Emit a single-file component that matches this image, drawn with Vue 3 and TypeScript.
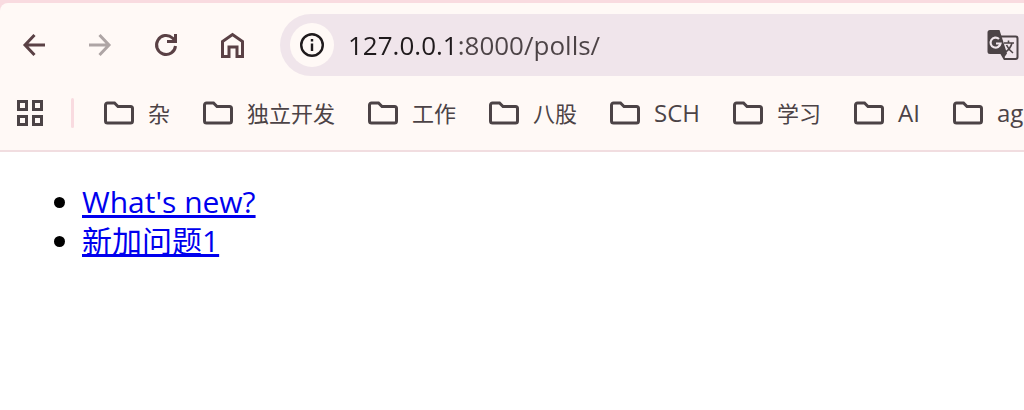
<script setup lang="ts">
import { ref } from 'vue'

interface Poll {
  id: number
  question: string
}

interface Folder {
  name: string
  latin?: boolean
}

const address = ref('127.0.0.1:8000/polls/')
const folders: Folder[] = [
  { name: '杂' },
  { name: '独立开发' },
  { name: '工作' },
  { name: '八股' },
  { name: 'SCH', latin: true },
  { name: '学习' },
  { name: 'AI', latin: true },
  { name: 'ag', latin: true },
]
const polls: Poll[] = [
  { id: 1, question: "What's new?" },
  { id: 2, question: '新加问题1' },
]
</script>

<template>
  <div class="browser">
    <header class="chrome">
      <div class="toolbar">
        <nav class="controls" aria-label="Navigation">
          <button type="button" class="tool" aria-label="Back">
            <svg viewBox="0 0 24 24"><path d="M22 12H2.500M11.500 2L2 12l9.500 10" /></svg>
          </button>
          <button type="button" class="tool" aria-label="Forward" disabled>
            <svg viewBox="0 0 24 24"><path d="M0 12h20M10.500 2l9.500 10-9.500 10" /></svg>
          </button>
          <button type="button" class="tool" aria-label="Reload">
            <svg viewBox="0 0 24 24"><path d="M20.500 13A9.500 9.500 0 1 1 17.500 5L20.500 8M20.500 1v7.500H12" /></svg>
          </button>
          <button type="button" class="tool" aria-label="Home">
            <svg viewBox="0 0 24 26"><path d="M1.500 24.500V9.500l10-7 10 7v15h-5.500V15h-8v9.500z" /></svg>
          </button>
        </nav>
        <div class="omnibox">
          <button type="button" class="info" aria-label="View site information">
            <svg viewBox="0 0 24 24">
              <circle cx="12" cy="12" r="10.800" />
              <path d="M12 10.500V18M12 6v2.500" />
            </svg>
          </button>
          <input v-model="address" class="url" type="text" aria-label="Address" spellcheck="false" />
          <button type="button" class="translate" aria-label="Translate this page">
            <svg viewBox="0 0 32 32">
              <path class="sheet" d="M14 7.500h14.500a2 2 0 0 1 2 2V28a2 2 0 0 1-2 2H17.500L14 24" />
              <path class="solid" d="M3 1h9.500l7.500 23.500-3.500 5L14.500 25H3a2.500 2.500 0 0 1-2.500-2.500v-19A2.500 2.500 0 0 1 3 1z" />
              <path class="letter" d="M12 10a5 5 0 1 0 1.500 4.500H9" />
              <path class="glyph" d="M17 14h10M21.500 11.500V14M25 14c-1 4-3.500 7-6.500 9M19.500 16c1.500 3.500 4 6 6.500 8" />
            </svg>
          </button>
        </div>
      </div>
      <nav class="bookmarks" aria-label="Bookmarks">
        <button type="button" class="apps" aria-label="Apps">
          <svg viewBox="0 0 26 26">
            <path d="M1.500 1.500h8v8h-8zM16.500 1.500h8v8h-8zM1.500 16.500h8v8h-8zM16.500 16.500h8v8h-8z" />
          </svg>
        </button>
        <span class="divider"></span>
        <button
          v-for="folder in folders"
          :key="folder.name"
          type="button"
          class="folder"
          :class="{ latin: folder.latin }"
        >
          <svg viewBox="0 0 30 24" aria-hidden="true">
            <path d="M3.500 2h7l3.500 3.500h12.500a2 2 0 0 1 2 2V20a2 2 0 0 1-2 2h-23a2 2 0 0 1-2-2V4a2 2 0 0 1 2-2z" />
          </svg>
          <span>{{ folder.name }}</span>
        </button>
      </nav>
    </header>
    <main class="page">
      <ul>
        <li v-for="poll in polls" :key="poll.id">
          <a :href="`/polls/${poll.id}/`">{{ poll.question }}</a>
        </li>
      </ul>
    </main>
  </div>
</template>

<style>
body {
  margin: 0;
  background: #fff;
}
</style>

<style scoped>
.browser {
  overflow: hidden;
  font-family: "Open Sans", "Noto Sans CJK SC", sans-serif;
}
button {
  flex: none;
  margin: 0;
  padding: 0;
  border: 0;
  background: none;
  color: inherit;
  font: inherit;
}
svg {
  display: block;
  fill: none;
  stroke: currentColor;
  overflow: visible;
}
.chrome {
  padding-top: 3px;
  background: #f9dbe0;
  color: #4c4346;
}
.toolbar {
  display: flex;
  align-items: center;
  padding: 11px 0 0 23px;
  border-top-left-radius: 8px;
  background: #fff9f6;
}
.controls {
  display: flex;
  gap: 42px;
  margin-right: 35px;
  color: #5a4145;
}
.tool {
  display: flex;
  align-items: center;
  height: 28px;
}
.tool svg {
  width: 24px;
  stroke-width: 3;
}
.tool:disabled {
  color: #aea5a5;
}
.omnibox {
  display: flex;
  flex: 1;
  align-items: center;
  min-width: 0;
  height: 62px;
  padding: 0 5px 0 10px;
  border-radius: 31px 0 0 31px;
  background: #f0e5eb;
}
.info {
  display: grid;
  place-items: center;
  width: 44px;
  height: 44px;
  border-radius: 50%;
  background: #fff9f6;
  color: #1f1a1c;
}
.info svg {
  width: 24px;
  stroke-width: 2.4;
}
.url {
  flex: 1;
  min-width: 0;
  height: 44px;
  margin-left: 14px;
  padding: 0;
  border: 0;
  outline: 0;
  background: linear-gradient(to right, #1f1a1c 109px, #4c4346 109px);
  background-clip: text;
  color: transparent;
  caret-color: #1f1a1c;
  font: 26px/44px "Open Sans", "Noto Sans CJK SC", sans-serif;
}
.translate svg {
  width: 32px;
}
.sheet {
  stroke-width: 2;
}
.solid {
  fill: currentColor;
  stroke: none;
}
.letter {
  stroke: #f0e5eb;
  stroke-width: 2.2;
}
.glyph {
  stroke-width: 1.6;
}
.bookmarks {
  display: flex;
  align-items: center;
  height: 74px;
  padding-left: 17px;
  border-bottom: 2px solid #f1dde0;
  background: #fff9f6;
  font-size: 22px;
  line-height: 30px;
  white-space: nowrap;
}
.apps svg {
  width: 26px;
  stroke-width: 3;
}
.divider {
  flex: none;
  width: 3px;
  height: 30px;
  margin: 0 30px 0 28px;
  border-radius: 2px;
  background: #f9dbe0;
}
.folder {
  display: flex;
  align-items: center;
  gap: 14px;
  margin-right: 33px;
}
.folder.latin {
  font-size: 24px;
}
.folder svg {
  width: 30px;
  stroke-width: 3;
}
.page {
  padding: 30px 16px;
  color: #000;
  font-size: 30px;
  line-height: 39px;
}
ul {
  margin: 0;
  padding-left: 66px;
}
a {
  color: #0000ee;
  text-decoration-thickness: 3px;
  text-decoration-skip-ink: none;
  text-underline-offset: 2px;
}
</style>
